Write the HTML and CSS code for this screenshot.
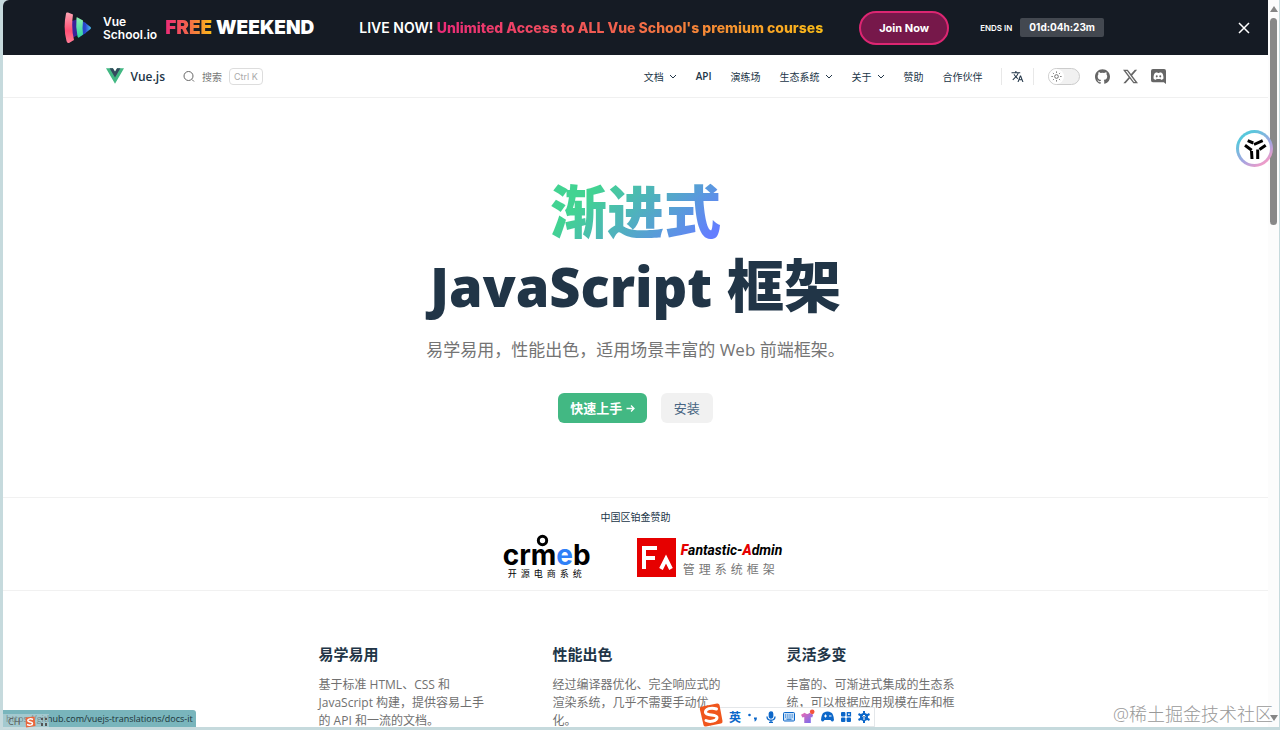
FILE: index.html
```html
<!DOCTYPE html>
<html lang="zh-CN">
<head>
  <meta charset="UTF-8">
  <meta name="viewport" content="width=device-width, initial-scale=1.0">
  <title>Vue.js - 渐进式 JavaScript 框架</title>
  <link rel="stylesheet" href="styles.css">
</head>
<body>

<div class="window">
  <div class="page">

    <div class="banner">
      <a class="school" href="#">
        <svg width="28" height="32" viewBox="0 0 28 32">
          <defs>
            <linearGradient id="red" x1="0" y1="0" x2="0" y2="1"><stop offset="0" stop-color="#fda5b4"/><stop offset="0.6" stop-color="#ff4f74"/><stop offset="1" stop-color="#ff7c96"/></linearGradient>
            <linearGradient id="green" x1="0" y1="0" x2="0" y2="1"><stop offset="0" stop-color="#8df0b4"/><stop offset="1" stop-color="#2fd3a0"/></linearGradient>
            <linearGradient id="blue" x1="0" y1="0" x2="1" y2="0"><stop offset="0" stop-color="#2b3fd0"/><stop offset="1" stop-color="#49c3f5"/></linearGradient>
          </defs>
          <path fill="#3a2399" d="M8 9l6-2v16l-6 3z"/>
          <path fill="url(#red)" d="M2 1.500Q2 0 4 .5L9 2.500Q7 16 10 28L5 31Q3 31.500 2.500 29Q-1 16 2 1.500z"/>
          <path fill="#2746c9" d="M18 9l4 2v10l-5 3z"/>
          <path fill="url(#green)" d="M12.500 6q0-1 1-.5l5.500 3q-1 8 0 14l-4 3q-1 .5-1.500-1q-2-9-1-18.500z"/>
          <path fill="url(#blue)" d="M21.500 11l5 4q1 1 0 2l-5 4q-1-5 0-10z"/>
        </svg>
        <span class="school-name">Vue<br>School.io</span>
        <strong class="school-offer"><span class="fire">FREE</span> WEEKEND</strong>
      </a>
      <p class="live">LIVE NOW! <strong class="fire">Unlimited Access to ALL Vue School's premium courses</strong></p>
      <a class="join" href="#">Join Now</a>
      <div class="ends">ENDS IN <time class="timer">01d:04h:23m</time></div>
      <button class="close" aria-label="Close">
        <svg width="12" height="12" viewBox="0 0 12 12" fill="none" stroke="#fff" stroke-width="1.500"><path d="M1 1l10 10M11 1L1 11"/></svg>
      </button>
    </div>

    <header class="nav">
      <div class="nav-inner">
        <a class="brand" href="#">
          <svg width="18" height="16" viewBox="0 0 128 112"><path fill="#42b883" d="M78.800 0L64 25.600 49.200 0H0l64 110.850L128 0z"/><path fill="#35495e" d="M78.800 0L64 25.600 49.200 0H25.600L64 66.500 102.400 0z"/></svg>
          Vue.js
        </a>
        <button class="search">
          <svg width="12" height="12" viewBox="0 0 12 12" fill="none" stroke="#666" stroke-width="1"><circle cx="5.500" cy="6" r="4.500"/><path d="M9 9.500l2 2"/></svg>
          <span>搜索</span>
          <kbd>Ctrl K</kbd>
        </button>

        <nav class="menu">
          <button>文档<svg class="chevron" viewBox="0 0 8 8"><path d="M1 3l3 3 3-3"/></svg></button>
          <a class="latin" href="#">API</a>
          <a href="#">演练场</a>
          <button>生态系统<svg class="chevron" viewBox="0 0 8 8"><path d="M1 3l3 3 3-3"/></svg></button>
          <button>关于<svg class="chevron" viewBox="0 0 8 8"><path d="M1 3l3 3 3-3"/></svg></button>
          <a href="#">赞助</a>
          <a href="#">合作伙伴</a>
        </nav>

        <button class="translate" aria-label="多语言">
          <svg width="13" height="13" viewBox="0 0 24 24" fill="#213547"><path d="M12.900 15l-2.500-2.500c1.700-1.900 3-4.100 3.700-6.500H17V4h-7V2H8v2H1v2h11.200C11.500 7.900 10.400 9.700 9 11.300 8.100 10.300 7.300 9.200 6.700 8h-2c.7 1.600 1.700 3.200 3 4.600L2.600 17.600 4 19l5-5 3.100 3.100zM18.500 10h-2L12 22h2l1.100-3h4.800l1.100 3h2zm-2.600 7l1.600-4.300 1.600 4.300z"/></svg>
        </button>

        <button class="switch" role="switch" aria-label="切换深色模式">
          <span class="knob">
            <svg width="11" height="11" viewBox="0 0 12 12" fill="none" stroke="#666" stroke-width="1"><circle cx="6" cy="6" r="2"/><path d="M6 .5v1.500M6 10v1.500M.5 6H2M10 6h1.500M2.100 2.100l1 1M8.900 8.900l1 1M2.100 9.900l1-1M8.900 3.100l1-1"/></svg>
          </span>
        </button>

        <div class="social">
          <a href="#" aria-label="GitHub"><svg viewBox="0 0 24 24"><path d="M12 .3C5.400.3 0 5.700 0 12.300c0 5.300 3.400 9.800 8.200 11.400.6.1.8-.3.8-.6v-2.200c-3.300.7-4-1.400-4-1.400-.6-1.400-1.400-1.800-1.400-1.800-1.100-.7.100-.7.100-.7 1.200.1 1.800 1.200 1.800 1.200 1.100 1.800 2.800 1.300 3.500 1 .1-.8.400-1.300.8-1.600-2.700-.3-5.500-1.300-5.500-5.900 0-1.300.5-2.400 1.200-3.200-.1-.3-.5-1.500.1-3.200 0 0 1-.3 3.300 1.200a11.500 11.500 0 0 1 6 0c2.300-1.500 3.300-1.200 3.300-1.200.7 1.700.2 2.900.1 3.200.8.800 1.200 1.900 1.200 3.200 0 4.600-2.800 5.600-5.500 5.900.4.400.8 1.100.8 2.200v3.300c0 .3.200.7.8.6A12 12 0 0 0 24 12.300C24 5.700 18.600.3 12 .3"/></svg></a>
          <a href="#" aria-label="X"><svg viewBox="0 0 24 24"><path d="M18.900 1.200h3.700l-8 9.200L24 22.800h-7.400l-5.800-7.600-6.600 7.600H.5l8.600-9.800L0 1.200h7.600l5.200 6.900zm-1.300 19.500h2L6.500 3.200H4.300z"/></svg></a>
          <a href="#" aria-label="Discord"><svg viewBox="0 0 24 24"><path fill-rule="evenodd" d="M3 0h18a3 3 0 0 1 3 3v21l-3.500-3H3a3 3 0 0 1-3-3V3a3 3 0 0 1 3-3zm4 6C5 7 4 11 4 15c1 1.500 2.500 2 4 2l1-1.600q3 .9 6 0L16 17c1.500 0 3-.5 4-2 0-4-1-8-3-9l-3-.8-.6 1.200h-2.800L10 5.200zm2.200 4a1.600 1.700 0 1 1 0 3.400 1.600 1.700 0 0 1 0-3.400zm5.600 0a1.600 1.700 0 1 1 0 3.400 1.600 1.700 0 0 1 0-3.400z"/></svg></a>
        </div>
      </div>
    </header>

    <main>
      <section class="hero">
        <h1><span class="accent">渐进式</span><br><span class="language">JavaScript</span> 框架</h1>
        <p class="tagline">易学易用，性能出色，适用场景丰富的 Web 前端框架。</p>
        <p class="actions">
          <a class="get-started" href="#">快速上手
            <svg width="9" height="9" viewBox="0 0 9 9" fill="none" stroke="#fff" stroke-width="1.300"><path d="M.5 4.500H8M5 1.500l3 3-3 3"/></svg>
          </a>
          <a class="setup" href="#">安装</a>
        </p>
      </section>

      <section class="sponsors">
        <span class="lead">中国区铂金赞助</span>
        <div class="logos">
          <a class="crmeb" href="#">
            <svg class="head" width="13" height="13" viewBox="0 0 14 14" fill="none" stroke="#000" stroke-width="3.200"><circle cx="7" cy="7" r="4.500"/></svg>
            <span class="crmeb-name">crm<span class="e">e</span>b</span>
            <span class="crmeb-sub">开源电商系统</span>
          </a>
          <a class="fantastic" href="#">
            <svg width="39" height="39" viewBox="0 0 39 39"><path fill="#e60000" d="M0 0h39v39H0z"/><path fill="none" stroke="#fff" stroke-width="4" d="M20 10H7v21M7 20h11M24 31l5-10 5 10"/></svg>
            <span class="fantastic-text">
              <span class="fantastic-name"><b>F</b>antastic-<b>A</b>dmin</span>
              <span class="fantastic-sub">管理系统框架</span>
            </span>
          </a>
        </div>
      </section>

      <section class="features">
        <div>
          <h2>易学易用</h2>
          <p>基于标准 HTML、CSS 和 JavaScript 构建，提供容易上手的 API 和一流的文档。</p>
        </div>
        <div>
          <h2>性能出色</h2>
          <p>经过编译器优化、完全响应式的渲染系统，几乎不需要手动优化。</p>
        </div>
        <div>
          <h2>灵活多变</h2>
          <p>丰富的、可渐进式集成的生态系统，可以根据应用规模在库和框架间切换自如。</p>
        </div>
      </section>
    </main>
  </div>

  <div class="scrollbar">
    <svg width="8" height="6" viewBox="0 0 8 6"><path fill="#858585" d="M4 0l4 6H0z"/></svg>
    <span class="thumb"></span>
    <svg width="8" height="6" viewBox="0 0 8 6"><path fill="#858585" d="M0 0h8L4 6z"/></svg>
  </div>
</div>

<!-- floating things over the page -->
<button class="assistant" aria-label="Assistant">
  <svg width="24" height="24" viewBox="0 0 24 24" fill="none" stroke="#000" stroke-width="3"><path d="M4.700 3.700l5.600 2.300M11 7.500l8.700-3.800M2 8.300l6.700 5M16.500 12.500l6.200-4.300M8.500 14l.5 8M14.700 12.500V22"/></svg>
</button>

<div class="status">https://github.com/vuejs-translations/docs-it</div>
<div class="ime-mini">
  <span>CH</span>
  <svg width="12" height="12" viewBox="0 0 24 24"><path fill="#e9663c" d="M3 3l18-2 2 19-19 3z"/><path fill="none" stroke="#fff" stroke-width="3" d="M18 7c-6-3-12 0-10 3s9 1 9 5-7 4-11 2"/></svg>
  <svg width="8" height="8" viewBox="0 0 8 8" fill="#555"><path d="M1 0h2v2H1zM5 0h2v2H5zM1 5h2v3H1zM5 5h2v3H5z"/></svg>
</div>

<div class="ime">
  <svg class="sogou" width="24" height="24" viewBox="0 0 24 24"><path fill="#f0561d" d="M3 3.500L18 .5q2-.3 2.500 1.500L23.500 18q.3 2-1.500 2.500L7 23.500q-2 .3-2.500-1.500L.8 6Q.5 4 3 3.500z"/><path fill="none" stroke="#fff" stroke-width="3" stroke-linecap="round" d="M17.500 6C12 4 6 6 6.500 9.500S18 11 18 14.500s-7 5-11 3"/></svg>
  <span class="lang">英</span>
  <svg width="12" height="12" viewBox="0 0 12 12" fill="#0c67c9"><circle cx="2.500" cy="4" r="1.300"/><path d="M7 6.500h3q0 3-2 4l-.8-.6q.8-.7.8-1.400H7z"/></svg>
  <svg width="12" height="12" viewBox="0 0 12 12" fill="none" stroke="#0c67c9" stroke-width="1.300"><rect x="4.300" y="1" width="3.400" height="6" rx="1.700" fill="#0c67c9"/><path d="M2 5.500c0 5 8 5 8 0M6 9v2.500M4 11.400h4"/></svg>
  <svg width="12" height="12" viewBox="0 0 12 12" fill="none" stroke="#0c67c9"><rect x=".5" y="1.500" width="11" height="8.500" rx="1" fill="#c9e0f7"/><path stroke-dasharray="1.200 1" d="M2 4h8M2 6h8"/><path d="M3.500 8.200h5"/></svg>
  <svg width="14" height="16" viewBox="0 0 15 17"><defs><linearGradient id="shirt" x1="0" y1="0" x2="1" y2="1"><stop offset="0" stop-color="#f06ab0"/><stop offset="1" stop-color="#6a6cf5"/></linearGradient></defs><path fill="url(#shirt)" d="M4 4q3 2.500 5 0l4 2-1 3-1.500-.5V15h-7V8.500L1.500 9 0 6z"/><circle cx="12" cy="3" r="2.500" fill="#f4533c"/></svg>
  <svg width="13" height="12" viewBox="0 0 13 12"><path fill="#0c67c9" d="M3 1.500q3.500-2 7 0 2.500 1 3 7.500-1.500 3-3.500 0h-6Q1.500 12 0 9q.5-6.500 3-7.500z"/><path stroke="#fff" d="M3 5h3M4.500 3.500v3M8 5h2.500"/></svg>
  <svg width="12" height="12" viewBox="0 0 12 12" fill="#0c67c9"><rect x="1" y="1" width="4.400" height="4.400" rx="1"/><path fill="none" stroke="#0c67c9" stroke-width="1.400" d="M7.400 1.800h3v3h-3z"/><rect x="1" y="6.600" width="4.400" height="4.400" rx="1"/><rect x="6.600" y="6.600" width="4.400" height="4.400" rx="1"/></svg>
  <svg width="12" height="12" viewBox="0 0 12 12"><path fill="none" stroke="#0c67c9" stroke-width="2" d="M6 0v12M.5 3l11 6M.5 9l11-6"/><circle cx="6" cy="6" r="4" fill="#0c67c9"/><path stroke="#fff" d="M6 4v5M4.500 5.500L6 4l1.500 1.500"/></svg>
</div>

<div class="watermark">@稀土掘金技术社区</div>

</body>
</html>
```

FILE: styles.css
```css
* {
  box-sizing: border-box;
}

body {
  margin: 0;
  background: #c6dadd;
  color: #213547;
  font-family: "Open Sans", "Noto Sans CJK SC", sans-serif;
  font-size: 10px;
}

a {
  color: inherit;
  text-decoration: none;
}

button {
  display: flex;
  align-items: center;
  padding: 0;
  border: none;
  background: none;
  color: inherit;
  font: inherit;
  cursor: pointer;
}

h1, h2, p {
  margin: 0;
}

.window {
  display: flex;
  height: 100vh;
  border: solid #c6dadd;
  border-width: 0 1px 3px 3px;
}

.page {
  flex: 1;
  overflow: hidden;
  background: #fff;
  border-top-left-radius: 6px;
}

/* banner */
.banner {
  display: flex;
  align-items: center;
  height: 55px;
  padding: 0 18px 0 61px;
  background: #151b24;
  color: #fff;
  font-family: Inter, sans-serif;
  font-weight: 600;
}

.school {
  display: flex;
  align-items: center;
}

.school-name {
  margin: 0 8px 0 11px;
  font-size: 12px;
  line-height: 13px;
}

.school-offer {
  font-size: 19px;
  font-weight: 900;
}

.fire {
  background: linear-gradient(90deg, #ea2a78, #f2604f 45%, #fbbc17);
  -webkit-background-clip: text;
  background-clip: text;
  color: transparent;
}

.live {
  margin-left: 45px;
  font-size: 14px;
}

.live strong {
  font-weight: 800;
}

.join {
  margin-left: 36px;
  padding: 8px 18px;
  border: 2px solid #dc2672;
  border-radius: 17px;
  background: #76184a;
  font-size: 11px;
  font-weight: 700;
  line-height: 14px;
}

.ends {
  display: flex;
  align-items: center;
  gap: 8px;
  margin-left: 31px;
  font-size: 8px;
}

.timer {
  padding: 0 9px;
  border-radius: 2px;
  background: #434850;
  font-size: 10px;
  font-weight: 700;
  line-height: 19px;
}

.close {
  margin-left: auto;
}

/* nav */
.nav {
  padding: 0 24px;
  border-bottom: 1px solid #f0f0f0;
}

.nav-inner {
  display: flex;
  align-items: center;
  max-width: 1060px;
  height: 42px;
  margin: 0 auto;
}

.brand {
  display: flex;
  align-items: center;
  gap: 7px;
  font-size: 12px;
  font-weight: 600;
}

.search {
  gap: 7px;
  margin-left: 18px;
  color: #777;
}

.search kbd {
  padding: 0 4px;
  border: 1px solid #ddd;
  border-radius: 4px;
  color: #aaa;
  font-family: Inter, sans-serif;
  font-size: 9px;
  line-height: 15px;
}

.menu {
  display: flex;
  align-items: center;
  gap: 19px;
  margin-left: auto;
}

.menu button {
  gap: 5px;
}

.latin {
  font-weight: 600;
}

.chevron {
  width: 8px;
  height: 8px;
  fill: none;
  stroke: #213547;
}

.translate {
  margin-left: 18px;
  padding: 2px 9px;
  border: solid #e8e8e8;
  border-width: 0 1px;
}

.switch {
  width: 32px;
  height: 17px;
  margin-left: 14px;
  border: 1px solid #ccc;
  border-radius: 9px;
  background: #f1f1f1;
}

.knob {
  display: flex;
  align-items: center;
  justify-content: center;
  width: 15px;
  height: 15px;
  border-radius: 50%;
  background: #fff;
}

.social {
  display: flex;
  gap: 13px;
  margin-left: 15px;
}

.social svg {
  display: block;
  width: 15px;
  height: 15px;
  fill: #666;
}

/* hero */
.hero {
  padding: 76px 24px 74px;
  text-align: center;
}

.hero h1 {
  font-size: 57px;
  font-weight: 800;
  line-height: 74px;
}

.accent {
  background: linear-gradient(315deg, #647eff 10%, #42d392 75%);
  -webkit-background-clip: text;
  background-clip: text;
  color: transparent;
}

.language {
  font-size: 54px;
  line-height: 1;
}

.tagline {
  margin-top: 15px;
  color: #747474;
  font-size: 17px;
  line-height: 26px;
}

.actions {
  display: flex;
  justify-content: center;
  gap: 14px;
  margin-top: 30px;
  font-size: 13px;
  line-height: 30px;
}

.get-started,
.setup {
  padding: 0 13px;
  border-radius: 6px;
}

.get-started {
  padding: 0 12px;
  background: #42b883;
  color: #fff;
  font-weight: 700;
}

.setup {
  background: #f1f1f1;
  color: #476582;
}

/* sponsors */
.sponsors {
  display: flex;
  flex-direction: column;
  align-items: center;
  gap: 10px;
  padding: 11px 24px;
  border: solid #f1f1f1;
  border-width: 1px 0;
}

.lead {
  line-height: 16px;
}

.logos {
  display: flex;
  align-items: center;
  gap: 46px;
  height: 44px;
  margin-left: 14px;
  color: #000;
}

.crmeb {
  position: relative;
  display: flex;
  flex-direction: column;
  align-items: center;
  padding-top: 9px;
}

/* the ring sits over the letter m */
.head {
  position: absolute;
  top: 0;
  left: 33px;
}

.crmeb-name {
  font-family: Inter, sans-serif;
  font-size: 28px;
  font-weight: 700;
  line-height: 24px;
}

.e {
  color: #2f80f7;
}

.crmeb-sub {
  font-size: 9px;
  line-height: 14px;
  letter-spacing: 4px;
}

.fantastic {
  display: flex;
  gap: 5px;
}

.fantastic-text {
  display: flex;
  flex-direction: column;
}

.fantastic-name {
  font-family: Roboto, sans-serif;
  font-size: 14px;
  font-style: italic;
  font-weight: 700;
  line-height: 24px;
}

.fantastic-name b {
  color: #e60000;
}

.fantastic-sub {
  margin-left: 2px;
  color: #777;
  font-size: 12px;
  line-height: 15px;
  letter-spacing: 4px;
}

/* features */
.features {
  display: grid;
  grid-template-columns: repeat(3, 1fr);
  gap: 64px;
  max-width: 686px;
  margin: 0 auto;
  padding: 52px 22px 52px 26px;
}

.features h2 {
  font-size: 15px;
  font-weight: 700;
  line-height: 22px;
}

.features p {
  margin-top: 11px;
  color: #707070;
  font-size: 12px;
  line-height: 18px;
}

/* scrollbar */
.scrollbar {
  display: flex;
  flex-direction: column;
  align-items: center;
  width: 11px;
  padding: 6px 0;
  background: #fcfcfc;
}

.thumb {
  width: 7px;
  height: 29%;
  margin: 6px 0 auto;
  border-radius: 4px;
  background: #888;
}

/* overlays */
.assistant {
  position: absolute;
  top: 130px;
  right: 7px;
  justify-content: center;
  width: 37px;
  height: 37px;
  border: 3px solid transparent;
  border-radius: 50%;
  background: linear-gradient(#fff, #fff) padding-box, linear-gradient(145deg, #58c7dc 20%, #a9a3e0 60%, #f09cc8 85%) border-box;
}

.status {
  position: absolute;
  bottom: 3px;
  left: 3px;
  padding: 0 3px;
  border-top-right-radius: 3px;
  background: #79b5bc;
  color: #1c3438;
  font-size: 9px;
  line-height: 17px;
}

.ime-mini {
  position: absolute;
  bottom: 1px;
  left: 3px;
  display: flex;
  align-items: center;
  gap: 4px;
  width: 46px;
  height: 15px;
  padding-left: 5px;
  background: rgba(205, 222, 225, 0.5);
  color: #555;
  font-size: 9px;
}

.ime {
  position: absolute;
  bottom: 3px;
  right: 405px;
  display: flex;
  align-items: center;
  gap: 6px;
  height: 20px;
  padding-right: 4px;
  border: 1px solid #e4e7ea;
  background: #fff;
}

.sogou {
  margin: -4px 0 0 -12px;
}

.lang {
  color: #0c67c9;
  font-size: 12px;
  font-weight: 700;
}

.watermark {
  position: absolute;
  right: 7px;
  bottom: 3px;
  color: #999;
  font-size: 18px;
  font-weight: 300;
  line-height: 26px;
}
```
